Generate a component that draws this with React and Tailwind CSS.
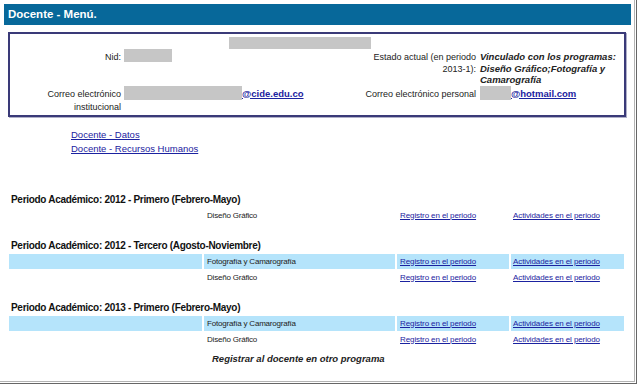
import React from 'react';

const periodos = [
  {
    titulo: 'Periodo Académico: 2012 - Primero (Febrero-Mayo)',
    programas: [{ nombre: 'Diseño Gráfico', azul: false }],
  },
  {
    titulo: 'Periodo Académico: 2012 - Tercero (Agosto-Noviembre)',
    programas: [
      { nombre: 'Fotografía y Camarografía', azul: true },
      { nombre: 'Diseño Gráfico', azul: false },
    ],
  },
  {
    titulo: 'Periodo Académico: 2013 - Primero (Febrero-Mayo)',
    programas: [
      { nombre: 'Fotografía y Camarografía', azul: true },
      { nombre: 'Diseño Gráfico', azul: false },
    ],
  },
];

const FilaPrograma = ({ nombre, azul }) => {
  const fondo = azul ? 'bg-[#b5e4fb]' : 'bg-transparent';
  return (
    <div className="grid grid-cols-[193px_191px_112px_113px] gap-x-[2px] h-[15px] mt-[1px] text-[8px] tracking-[-0.2px] text-[#222]">
      <div className={fondo} />
      <div className={`${fondo} flex items-center pl-[3px]`}>{nombre}</div>
      <div className={`${fondo} flex items-center pl-[3px]`}>
        <a href="#" className="underline text-[#1b22a0] tracking-[-0.1px]">Registro en el periodo</a>
      </div>
      <div className={`${fondo} flex items-center pl-[2px]`}>
        <a href="#" className="underline text-[#1b22a0] tracking-[-0.1px]">Actividades en el periodo</a>
      </div>
    </div>
  );
};

const App = () => {
  return (
    <div className="w-[642px] h-[390px] bg-white font-['Liberation_Sans',Arial,sans-serif]">
      <div className="w-[637px] h-[384px] border-r border-b border-[#666] pr-[1px] pb-[1px]">
        <div className="h-full border-r border-b border-[#b4b4b4] pt-[4px] pl-[4px]">
          {/* encabezado */}
          <div className="w-[627px] h-[21px] bg-[#07689a] flex items-center pl-[4px] text-white font-bold text-[11.5px]">
            Docente - Menú.
          </div>

          {/* datos del docente */}
          <div className="ml-[4px] mt-[7px] w-[618px] h-[85px] border-2 border-[#3a3a78] shadow-[1px_1px_0_#b0b0c8] text-[9px] text-[#222] leading-[12px]">
            <div className="h-[15px] pt-[3px] pl-[219px]">
              <div className="w-[142px] h-[12px] bg-[#c6c6c6]" />
            </div>
            <div className="grid grid-cols-[112px_234px_118px_142px] gap-x-[2px]">
              <div className="text-right pt-[2px] pr-[1px]">Nid:</div>
              <div>
                <div className="w-[48px] h-[13px] bg-[#c6c6c6]" />
              </div>
              <div className="text-right pt-[2px] pr-[2px]">Estado actual (en periodo 2013-1):</div>
              <div className="pt-[2px] font-bold italic text-[9.5px] leading-[11.5px] text-[#222]">
                Vinculado con los programas: Diseño Gráfico;Fotografía y Camarografía
              </div>

              <div className="text-right pt-[2px] pr-[1px] leading-[13px]">
                Correo electrónico institucional
              </div>
              <div className="flex items-start">
                <div className="w-[118px] h-[14px] bg-[#c6c6c6]" />
                <a href="#" className="pt-[2px] font-bold underline text-[#1b22a0] text-[9.5px]">@cide.edu.co</a>
              </div>
              <div className="text-right pt-[2px] pr-[2px]">Correo electrónico personal</div>
              <div className="flex items-start">
                <div className="w-[31px] h-[14px] bg-[#c6c6c6]" />
                <a href="#" className="pt-[2px] font-bold underline text-[#1b22a0] text-[9.5px]">@hotmail.com</a>
              </div>
            </div>
          </div>

          {/* enlaces */}
          <div className="mt-[11px] ml-[67px] flex flex-col items-start text-[9.5px] leading-[13.5px]">
            <a href="#" className="underline text-[#1b22a0]">Docente - Datos</a>
            <a href="#" className="underline text-[#1b22a0]">Docente - Recursos Humanos</a>
          </div>

          {/* periodos */}
          <div className="mt-[36px] ml-[5px]">
            {periodos.map((p, i) => (
              <div key={p.titulo} className={i === 0 ? '' : 'mt-[14px]'}>
                <div className="h-[16px] flex items-center pl-[2px] font-bold text-[10px] tracking-[-0.3px] text-[#111]">
                  {p.titulo}
                </div>
                {p.programas.map((prog, j) => (
                  <FilaPrograma key={j} nombre={prog.nombre} azul={prog.azul} />
                ))}
              </div>
            ))}
            <div className="mt-[6px] h-[12px] leading-[12px] pl-[203px] font-bold italic text-[9.5px] text-[#222]">
              Registrar al docente en otro programa
            </div>
          </div>
        </div>
      </div>
    </div>
  );
};

export default App;
